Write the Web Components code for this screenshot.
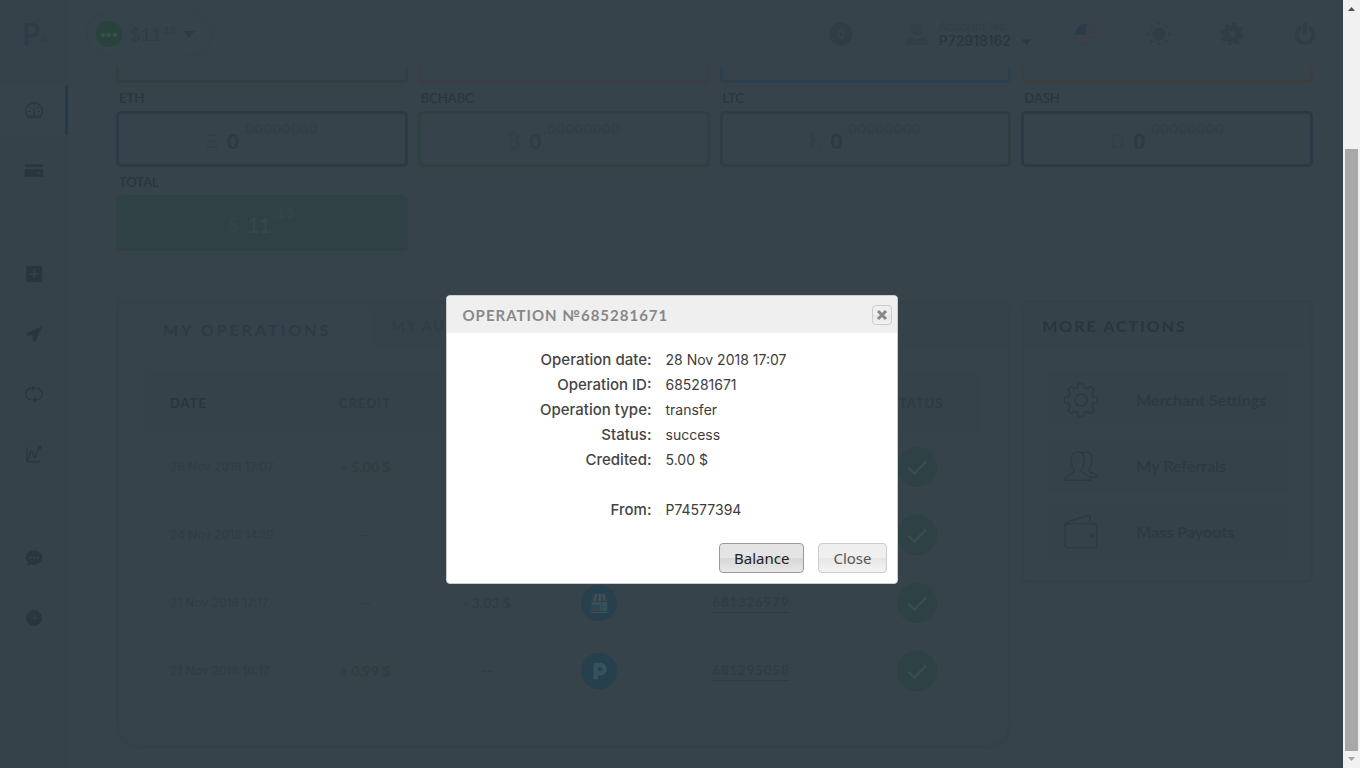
<!DOCTYPE html>
<html lang="en">
  <head>
    <meta charset="UTF-8">
    <meta name="viewport" content="width=device-width, initial-scale=1.0">
    <title>Operations</title>
    <style>
      html, body {
        height: 100%;
        margin: 0;
      }
      body {
        --page: #36434a;
        --shade: #354249;
        --line: #344148;
        --ink: #29363d;
        --soft: #2f3d44;
        --blue: #2a3b48;
        --green: #2f4144;
        --caps: Lato, "Liberation Sans", sans-serif;
        --text: Inter, "Liberation Sans", sans-serif;
        background: var(--page);
        color: var(--soft);
        font: 12px/20px var(--text);
        overflow: hidden;
      }
    </style>
  </head>
  <body>
    <app-shell>
      <app-sidebar slot="side"></app-sidebar>
      <app-topbar slot="top"></app-topbar>
      <wallet-grid>
        <div slot="cut" style="--edge: #304142"></div>
        <div slot="cut" style="--edge: #3b3d47"></div>
        <div slot="cut" style="--edge: #2c404d"></div>
        <div slot="cut" style="--edge: #3c3f42"></div>
        <wallet-card label="ETH" sign="Ξ" whole="0" rest=".00000000" style="--edge: #2d3b46"></wallet-card>
        <wallet-card label="BCHABC" sign="₿" whole="0" rest=".00000000" style="--edge: #2f4143; --sum: #2d3f43"></wallet-card>
        <wallet-card label="LTC" sign="Ł" whole="0" rest=".00000000" style="--edge: #303d45"></wallet-card>
        <wallet-card label="DASH" sign="Ð" whole="0" rest=".00000000" style="--edge: #2b3a46"></wallet-card>
        <wallet-card label="TOTAL" sign="$" whole="11" rest=".13" style="--edge: var(--green); --fill: var(--green); --sum: #36474b; --faint: #33454a"></wallet-card>
      </wallet-grid>
      <panel-row>
        <operations-panel></operations-panel>
        <actions-panel slot="aside">
          <action-link icon="cog">Merchant Settings</action-link>
          <action-link icon="people">My Referrals</action-link>
          <action-link icon="wallet">Mass Payouts</action-link>
        </actions-panel>
      </panel-row>
      <operation-dialog slot="over">
        <span slot="title">OPERATION №685281671</span>
      </operation-dialog>
      <page-scrollbar slot="scroll"></page-scrollbar>
    </app-shell>

    <script>
    const define = (name, html, setup) => customElements.define(name, class extends HTMLElement {
      constructor() {
        super();
        this.attachShadow({mode: "open"}).innerHTML = html;
      }
      connectedCallback() {
        setup?.call(this, this.shadowRoot);
      }
    });

    const icons = {
      gauge: `<path d="M5.500 21a10 10 0 1 1 13 0z" fill="none" stroke="currentColor" stroke-width="2"/><path d="M6 18h12l-1 3H7zM11.200 10h1.600l.7 8h-3z" fill="currentColor"/><path d="M12 5v3M6.500 8l2 2M17.500 8l-2 2M4.500 13.500H8M16 13.500h3.500" stroke="currentColor" stroke-width="1.500"/>`,
      card: `<path d="M1 5h22v3H1zM1 11h22v9H1z" fill="currentColor"/><path d="M15 15h5v2h-4z" fill="#36434a"/>`,
      plus: `<rect x="2.500" y="2.500" width="19" height="19" rx="1" fill="currentColor"/><path d="M12 7v10M7 12h10" stroke="#36434a" stroke-width="1.600"/>`,
      plane: `<path d="M21.500 3 3 11l2 3 4-.5 2 .5-1 5 3.500 3z" fill="currentColor"/>`,
      cycle: `<path d="M9 19a7 7 0 0 1 0-14h3M15 5a7 7 0 0 1 0 14h-3" fill="none" stroke="currentColor" stroke-width="1.600"/><path d="m10 2 4 3-4 3zM14 16l-4 3 4 3z" fill="currentColor"/>`,
      chart: `<path d="M3.500 4v17H20M4 20c3-2 2.500-12 5-12s1 8 4 8 1-9 6-11" fill="none" stroke="currentColor" stroke-width="1.500"/><path d="m16 3 5-1-1 5z" fill="currentColor"/>`,
      chat: `<path d="M12 3c5.500 0 10 3.500 10 8.500S17.500 20 12 20c-2 0-3 0-4-.5L3.500 21 5 17.500c-2-1.500-3-3.500-3-6C2 6.500 6.500 3 12 3z" fill="currentColor"/><path d="M6.500 10.500h3v2h-3zM10.800 10.500h2.500v2h-2.500zM14.800 10.500h2.500v2h-2.500z" fill="#36434a"/>`,
      clock: `<circle cx="12" cy="12" r="9.500" fill="currentColor"/><path d="M12 7v5h4" fill="none" stroke="#36434a" stroke-width="1.500"/>`,
      coin: `<circle cx="12" cy="12" r="11.500" fill="currentColor"/><ellipse cx="12" cy="12" rx="2.500" ry="4" fill="none" stroke="#38454b" stroke-width="1.500"/>`,
      user: `<circle cx="12" cy="7.500" r="6" fill="currentColor"/><path d="M1 23c0-6 3-8 8-8l3 3 3-3c5 0 8 2 8 8z" fill="currentColor"/>`,
      caret: `<path d="M1 6h22L12 19z" fill="currentColor"/>`,
      flag: `<clipPath id="c"><circle cx="12" cy="12" r="10.500"/></clipPath><g clip-path="url(#c)"><path d="M0 2h24v3H0zM0 8h24v3H0zM0 14h24v3H0zM0 20h24v3H0z" fill="#3d3e48"/><path d="M0 0h12v13H0z" fill="#293c49"/></g>`,
      sun: `<circle cx="12" cy="12" r="6.500" fill="currentColor"/><g fill="currentColor"><circle cx="12" cy="1.800" r="1.300"/><circle cx="12" cy="22.200" r="1.300"/><circle cx="1.800" cy="12" r="1.300"/><circle cx="22.200" cy="12" r="1.300"/><circle cx="4.800" cy="4.800" r="1.300"/><circle cx="19.200" cy="4.800" r="1.300"/><circle cx="4.800" cy="19.200" r="1.300"/><circle cx="19.200" cy="19.200" r="1.300"/></g>`,
      gear: `<circle cx="12" cy="12" r="6" fill="none" stroke="currentColor" stroke-width="6"/><circle cx="12" cy="12" r="9.500" fill="none" stroke="currentColor" stroke-width="4" stroke-dasharray="4 3.460"/>`,
      power: `<path d="M8 5a8.500 8.500 0 1 0 8 0M12 1v11" fill="none" stroke="currentColor" stroke-width="3.600"/>`,
      check: `<path d="m4 12.500 5.500 5.500L20.500 7" fill="none" stroke="currentColor" stroke-width="2"/>`,
      shop: `<path d="M4 11h17v10H4z" fill="#37525b"/><path d="M4 14h9v5H4z" fill="#2b4651"/><path d="M5 18h8v3H4zM5 2h3L6 10H3zM10 2h2v8H8zM14 2h2l1 8h-3zM18 2h1l3 8h-3z" fill="#3d4248"/><path d="M8 2h2l-2 8H6zM12 2h2v8h-2zM16 2h2l1 8h-2zM3 22h19v1H3z" fill="#3e565e"/><path d="M15 12v9M15 16h5" stroke="#2b4651"/>`,
      parking: `<path d="M8.500 21V5.500h5a4 4 0 0 1 0 9H9" fill="none" stroke="currentColor" stroke-width="5"/>`,
      cog: `<path d="m10.300 1-.5 2.700-1.900.8L5.500 3 3.200 5.400l1.500 2.300-.8 2-2.900.5v3.600l2.900.5.8 2-1.500 2.300L5.500 21l2.400-1.500 1.900.8.5 2.700h3.400l.5-2.700 1.900-.8 2.400 1.500 2.300-2.400-1.500-2.300.8-2 2.900-.5v-3.600l-2.900-.5-.8-2 1.500-2.300L18.500 3l-2.400 1.500-1.900-.8-.5-2.700z" fill="none" stroke="currentColor"/><circle cx="12" cy="12" r="4" fill="none" stroke="currentColor"/>`,
      people: `<path d="M1 21.500c0-4 6-3.500 6.500-6.500C6 13 5.500 10 5.500 7c0-3 1.800-4.500 4.200-4.500S14 4 14 7c0 3-.5 6-2 8 .5 3 6.500 2.500 6.500 6.500z" fill="none" stroke="currentColor" stroke-width=".9"/><path d="M12.500 3.500c1-.6 1.500-.8 2.800-.8 2.200 0 4 1.500 4 4.300 0 3-.8 5.500-2.200 7.500.4 3 6 2 6 5h-5" fill="none" stroke="currentColor" stroke-width=".9"/>`,
      wallet: `<rect x="1.500" y="6.500" width="21" height="16" rx="2" fill="none" stroke="currentColor"/><path d="M1.500 8c0-2 .5-2.500 2-3l13-4c1-.3 1.500 0 1.500 1v3" fill="none" stroke="currentColor"/><circle cx="19" cy="14.500" r="1.300" fill="currentColor"/>`,
      cross: `<path d="m4 4 16 16M20 4 4 20" stroke="currentColor" stroke-width="6"/>`,
    };

    define("app-icon", `
      <style>
        :host { display: inline-flex; flex: none; width: 20px; height: 20px; }
        svg { width: 100%; height: 100%; }
      </style>
      <svg viewBox="0 0 24 24" aria-hidden="true"></svg>`, function (root) {
      root.querySelector("svg").innerHTML = icons[this.getAttribute("name")];
    });

    define("app-shell", `
      <style>
        :host { display: flex; height: 100vh; position: relative; }
        .main { flex: 1; min-width: 0; display: flex; flex-direction: column; }
        main { padding: 0 30px 0 48px; }
      </style>
      <slot name="side"></slot>
      <div class="main">
        <slot name="top"></slot>
        <main><slot></slot></main>
      </div>
      <slot name="scroll"></slot>
      <slot name="over"></slot>`);

    define("app-sidebar", `
      <style>
        :host {
          display: block;
          box-sizing: border-box;
          width: 68px;
          background: var(--shade);
          border-right: 1px solid var(--line);
        }
        .logo {
          display: flex;
          align-items: flex-end;
          justify-content: center;
          box-sizing: border-box;
          height: 85px;
          padding: 0 0 37px 3px;
          font: bold 30px/30px var(--caps);
          color: #2c3d49;
          text-decoration: none;
        }
        small { font-size: 10px; line-height: 20px; font-weight: normal; }
        nav, div { display: flex; flex-direction: column; }
        nav { gap: 54px; }
        div { gap: 10px; }
        div a {
          display: flex;
          align-items: center;
          justify-content: center;
          height: 50px;
          color: var(--ink);
        }
        a.on {
          background: var(--page);
          border-right: 3px solid #263b48;
          color: var(--blue);
          margin-right: -1px;
          padding-left: 2px;
        }
      </style>
      <a class="logo" href="#">P<small>®</small></a>
      <nav>
        <div>
          <a class="on" href="#" aria-label="Dashboard"><app-icon name="gauge"></app-icon></a>
          <a href="#" aria-label="Cards"><app-icon name="card"></app-icon></a>
        </div>
        <div>
          <a href="#" aria-label="Add funds"><app-icon name="plus"></app-icon></a>
          <a href="#" aria-label="Transfer"><app-icon name="plane"></app-icon></a>
          <a href="#" aria-label="Exchange"><app-icon name="cycle"></app-icon></a>
          <a href="#" aria-label="Trade"><app-icon name="chart"></app-icon></a>
        </div>
        <div>
          <a href="#" aria-label="Support"><app-icon name="chat"></app-icon></a>
          <a href="#" aria-label="History"><app-icon name="clock"></app-icon></a>
        </div>
      </nav>`);

    define("app-topbar", `
      <style>
        :host {
          display: flex;
          flex: none;
          align-items: center;
          justify-content: space-between;
          height: 67px;
          padding: 0 26px 0 18px;
        }
        button {
          display: flex;
          align-items: center;
          border: 0;
          padding: 0;
          background: none;
          color: #303d44;
          font: 12px/14px var(--text);
          text-align: left;
        }
        .balance {
          height: 44px;
          padding: 0 16px 0 9px;
          gap: 8px;
          border: 1px solid var(--line);
          border-radius: 22px;
          font: 18px/24px var(--caps);
        }
        .dots {
          width: 26px;
          border-radius: 50%;
          background: #29433c;
          color: #38504c;
          font: bold 10px/26px var(--caps);
          text-align: center;
        }
        sup { font-size: 10px; line-height: 10px; }
        app-icon { width: 24px; height: 24px; }
        .caret { width: 12px; height: 12px; color: #293d3f; }
        .right, .tools { display: flex; align-items: center; }
        .right { gap: 42px; }
        .tools { gap: 49px; }
        .account { gap: 10px; padding-left: 10px; color: #323f46; }
        .account .caret { color: #2a3b46; width: 11px; align-self: flex-end; }
        b { display: block; font-size: 14px; font-weight: 500; color: var(--ink); }
      </style>
      <button class="balance">
        <span class="dots">•••</span>
        <span>$11<sup>.13</sup></span>
        <app-icon class="caret" name="caret"></app-icon>
      </button>
      <div class="right">
        <button aria-label="Notifications"><app-icon name="coin"></app-icon></button>
        <button class="account">
          <app-icon name="user"></app-icon>
          <span>Account No.<b>P72918162</b></span>
          <app-icon class="caret" name="caret"></app-icon>
        </button>
        <div class="tools">
          <button aria-label="Language"><app-icon name="flag"></app-icon></button>
          <button aria-label="Theme"><app-icon name="sun"></app-icon></button>
          <button aria-label="Settings"><app-icon name="gear"></app-icon></button>
          <button aria-label="Log out"><app-icon name="power"></app-icon></button>
        </div>
      </div>`);

    // the upper row is scrolled under the top bar, only its lower edge shows
    define("wallet-grid", `
      <style>
        :host { display: block; }
        .cut, .cards { display: grid; grid-template-columns: repeat(4, 1fr); column-gap: 10px; }
        .cut { grid-template-rows: 16px; overflow: hidden; align-items: end; }
        ::slotted([slot="cut"]) {
          box-sizing: border-box;
          height: 56px;
          border: 3px solid var(--edge);
          border-radius: 5px;
        }
      </style>
      <div class="cut"><slot name="cut"></slot></div>
      <div class="cards"><slot></slot></div>`);

    define("wallet-card", `
      <style>
        :host { display: block; }
        h3 {
          margin: 0;
          padding: 3px 3px 0;
          font: 500 13px/25px var(--caps);
          color: var(--ink);
        }
        div {
          display: flex;
          align-items: center;
          justify-content: center;
          box-sizing: border-box;
          height: 56px;
          padding-top: 4px;
          border: 3px solid var(--edge);
          border-radius: 5px;
          background: var(--fill, none);
          color: var(--faint, #323f47);
          font: bold 20px/24px var(--caps);
        }
        .sign { margin-right: 9px; font-family: "Liberation Serif", serif; font-weight: normal; }
        .whole { color: var(--sum, #2b3a43); }
        .rest { margin: 0 0 24px 2px; font-size: 14px; line-height: 16px; letter-spacing: 1px; }
      </style>
      <h3></h3>
      <div><span class="sign"></span><span class="whole"></span><span class="rest"></span></div>`, function (root) {
      root.querySelector("h3").textContent = this.getAttribute("label");
      for (const key of ["sign", "whole", "rest"]) {
        root.querySelector("." + key).textContent = this.getAttribute(key);
      }
    });

    define("panel-row", `
      <style>
        :host {
          display: grid;
          grid-template-columns: repeat(4, 1fr);
          column-gap: 10px;
          align-items: start;
          padding-top: 49px;
        }
        .wide { grid-column: span 3; }
      </style>
      <div class="wide"><slot></slot></div>
      <slot name="aside"></slot>`);

    const rows = [
      ["28 Nov 2018 17:07", "+ 5.00 $", "--", "parking", "685281671"],
      ["24 Nov 2018 14:19", "--", "- 2.00 $", "shop", "683387154"],
      ["21 Nov 2018 17:17", "--", "- 3.03 $", "shop", "681326979"],
      ["21 Nov 2018 16:17", "+ 0.99 $", "--", "parking", "681295058"],
    ];

    define("operations-panel", `
      <style>
        :host {
          display: block;
          border: 4px solid var(--line);
          border-width: 4px 3px;
          border-radius: 6px 6px 24px 24px;
          padding-bottom: 40px;
        }
        .tabs { display: flex; height: 44px; background: var(--shade); }
        .tabs button {
          padding: 0 20px;
          border: 0;
          background: none;
          color: #303d45;
          font: bold 14px/44px var(--caps);
          letter-spacing: 2px;
        }
        .tabs .on {
          padding: 8px 40px 0 44px;
          background: var(--page);
          border-radius: 8px 8px 0 0;
          color: #2b3c48;
          font-size: 16px;
          line-height: 36px;
          letter-spacing: 3px;
        }
        table {
          width: calc(100% - 52px);
          margin: 25px 26px 0;
          border-spacing: 0;
          table-layout: fixed;
        }
        th, td { padding: 0; text-align: center; }
        th {
          height: 60px;
          background: var(--shade);
          color: #2e3b43;
          font: bold 13px/20px var(--caps);
          letter-spacing: 1px;
        }
        th:first-child, td:first-child { padding-left: 25px; text-align: left; }
        th:first-child { color: var(--ink); }
        td { height: 68px; }
        tr:nth-child(even) td { box-shadow: 0 1px var(--shade), 0 -1px var(--shade); }
        .money { font: bold 14px/20px var(--caps); }
        .plus { color: #2b4040; }
        td a {
          padding-bottom: 2px;
          border-bottom: 1px dotted var(--ink);
          color: var(--soft);
          font: bold 13px/16px var(--caps);
          letter-spacing: 1px;
          text-decoration: none;
        }
        .type, .done {
          display: inline-flex;
          align-items: center;
          justify-content: center;
          width: 36px;
          height: 36px;
          border-radius: 50%;
          background: #27404d;
          color: #36525e;
          vertical-align: middle;
        }
        .done { width: 40px; height: 40px; background: #2e4145; color: #3a4e52; }
        .type app-icon { width: 22px; height: 22px; }
        .done app-icon { width: 26px; height: 26px; }
      </style>
      <div class="tabs"><button class="on">MY OPERATIONS</button><button>MY AUT</button></div>
      <table>
        <colgroup>
          <col style="width: 159px"><col style="width: 122px"><col style="width: 122px">
          <col style="width: 102px"><col style="width: 202px"><col>
        </colgroup>
        <thead><tr><th>DATE</th><th>CREDIT</th><th>DEBIT</th><th></th><th>ID</th><th>STATUS</th></tr></thead>
        <tbody></tbody>
      </table>`, function (root) {
      root.querySelector("tbody").innerHTML = rows.map(([date, credit, debit, type, id]) => `
        <tr>
          <td>${date}</td>
          <td class="money plus">${credit}</td>
          <td class="money">${debit}</td>
          <td><span class="type"><app-icon name="${type}"></app-icon></span></td>
          <td><a href="#">${id}</a></td>
          <td><span class="done"><app-icon name="check"></app-icon></span></td>
        </tr>`).join("");
    });

    define("actions-panel", `
      <style>
        :host { display: block; border: 3px solid var(--line); border-radius: 6px; }
        h2 {
          margin: 0;
          padding: 2px 18px 0;
          background: var(--shade);
          color: var(--ink);
          font: bold 16px/42px var(--caps);
          letter-spacing: 2px;
        }
        div { display: grid; gap: 13px; padding: 26px 23px 22px; }
      </style>
      <h2>MORE ACTIONS</h2>
      <div><slot></slot></div>`);

    define("action-link", `
      <style>
        :host { display: block; }
        a {
          display: flex;
          align-items: center;
          gap: 37px;
          height: 53px;
          padding-left: 16px;
          border-radius: 4px;
          background: var(--shade);
          color: #2d3a44;
          font: bold 16px/20px var(--caps);
          text-decoration: none;
        }
        app-icon { width: 36px; height: 36px; }
      </style>
      <a href="#"><app-icon></app-icon><slot></slot></a>`, function (root) {
      root.querySelector("app-icon").replaceWith(Object.assign(document.createElement("template"), {
        innerHTML: `<app-icon name="${this.getAttribute("icon")}"></app-icon>`,
      }).content);
    });

    define("operation-dialog", `
      <style>
        :host {
          position: absolute;
          inset: 0 17px 0 0;
          display: flex;
          align-items: flex-start;
          justify-content: center;
          padding-top: 295px;
        }
        section {
          box-sizing: border-box;
          width: 452px;
          border: 1px solid #ccc;
          border-radius: 4px;
          background: #fff;
          color: #444;
          overflow: hidden;
        }
        header {
          display: flex;
          align-items: center;
          justify-content: space-between;
          height: 37px;
          padding: 0 5px 0 16px;
          background: #efefef;
        }
        h1 { margin: 0; font: bold 15px/20px var(--caps); letter-spacing: 1px; color: #888; }
        dl {
          display: grid;
          grid-template-columns: 205px 1fr;
          column-gap: 14px;
          margin: 0;
          padding-top: 14px;
          font: 14px/25px var(--text);
        }
        dt { text-align: right; font-size: 15px; font-weight: 500; }
        dd { margin: 0; color: #3c3c3c; }
        .gap { padding-top: 25px; }
        footer { display: flex; justify-content: flex-end; gap: 14px; padding: 21px 10px 10px; }
        button {
          height: 30px;
          padding: 0 14px;
          border: 1px solid #ccc;
          border-radius: 4px;
          background: linear-gradient(#efefef 50%, #e6e6e6 50%, #f3f3f3);
          color: #555;
          font: 15px/20px "Noto Sans", sans-serif;
        }
        .main {
          border-color: #999;
          background: linear-gradient(#e4e4e4 50%, #d6d6d6 50%, #e8e8e8);
          color: #212121;
        }
        .x { display: flex; width: 20px; height: 20px; padding: 3px; color: #888; }
        .x app-icon { width: 12px; height: 12px; }
      </style>
      <section role="dialog" aria-labelledby="title">
        <header>
          <h1 id="title"><slot name="title"></slot></h1>
          <button class="x" aria-label="Dismiss"><app-icon name="cross"></app-icon></button>
        </header>
        <dl>
          <dt>Operation date:</dt><dd>28 Nov 2018 17:07</dd>
          <dt>Operation ID:</dt><dd>685281671</dd>
          <dt>Operation type:</dt><dd>transfer</dd>
          <dt>Status:</dt><dd>success</dd>
          <dt>Credited:</dt><dd>5.00 $</dd>
          <dt class="gap">From:</dt><dd class="gap">P74577394</dd>
        </dl>
        <footer>
          <button class="main">Balance</button>
          <button>Close</button>
        </footer>
      </section>`);

    define("page-scrollbar", `
      <style>
        :host {
          display: flex;
          flex-direction: column;
          width: 17px;
          background: #f1f1f1;
        }
        svg { flex: none; width: 17px; height: 17px; }
        .track { flex: 132; }
        .thumb { flex: 602; margin: 0 2px; background: #a8a8a8; }
      </style>
      <svg viewBox="0 0 17 17"><path d="M5 11 8.500 7l3.500 4z" fill="#505050"/></svg>
      <div class="track"></div>
      <div class="thumb"></div>
      <svg viewBox="0 0 17 17"><path d="m5 6 3.500 4L12 6z" fill="#a3a3a3"/></svg>`);
    </script>
  </body>
</html>
